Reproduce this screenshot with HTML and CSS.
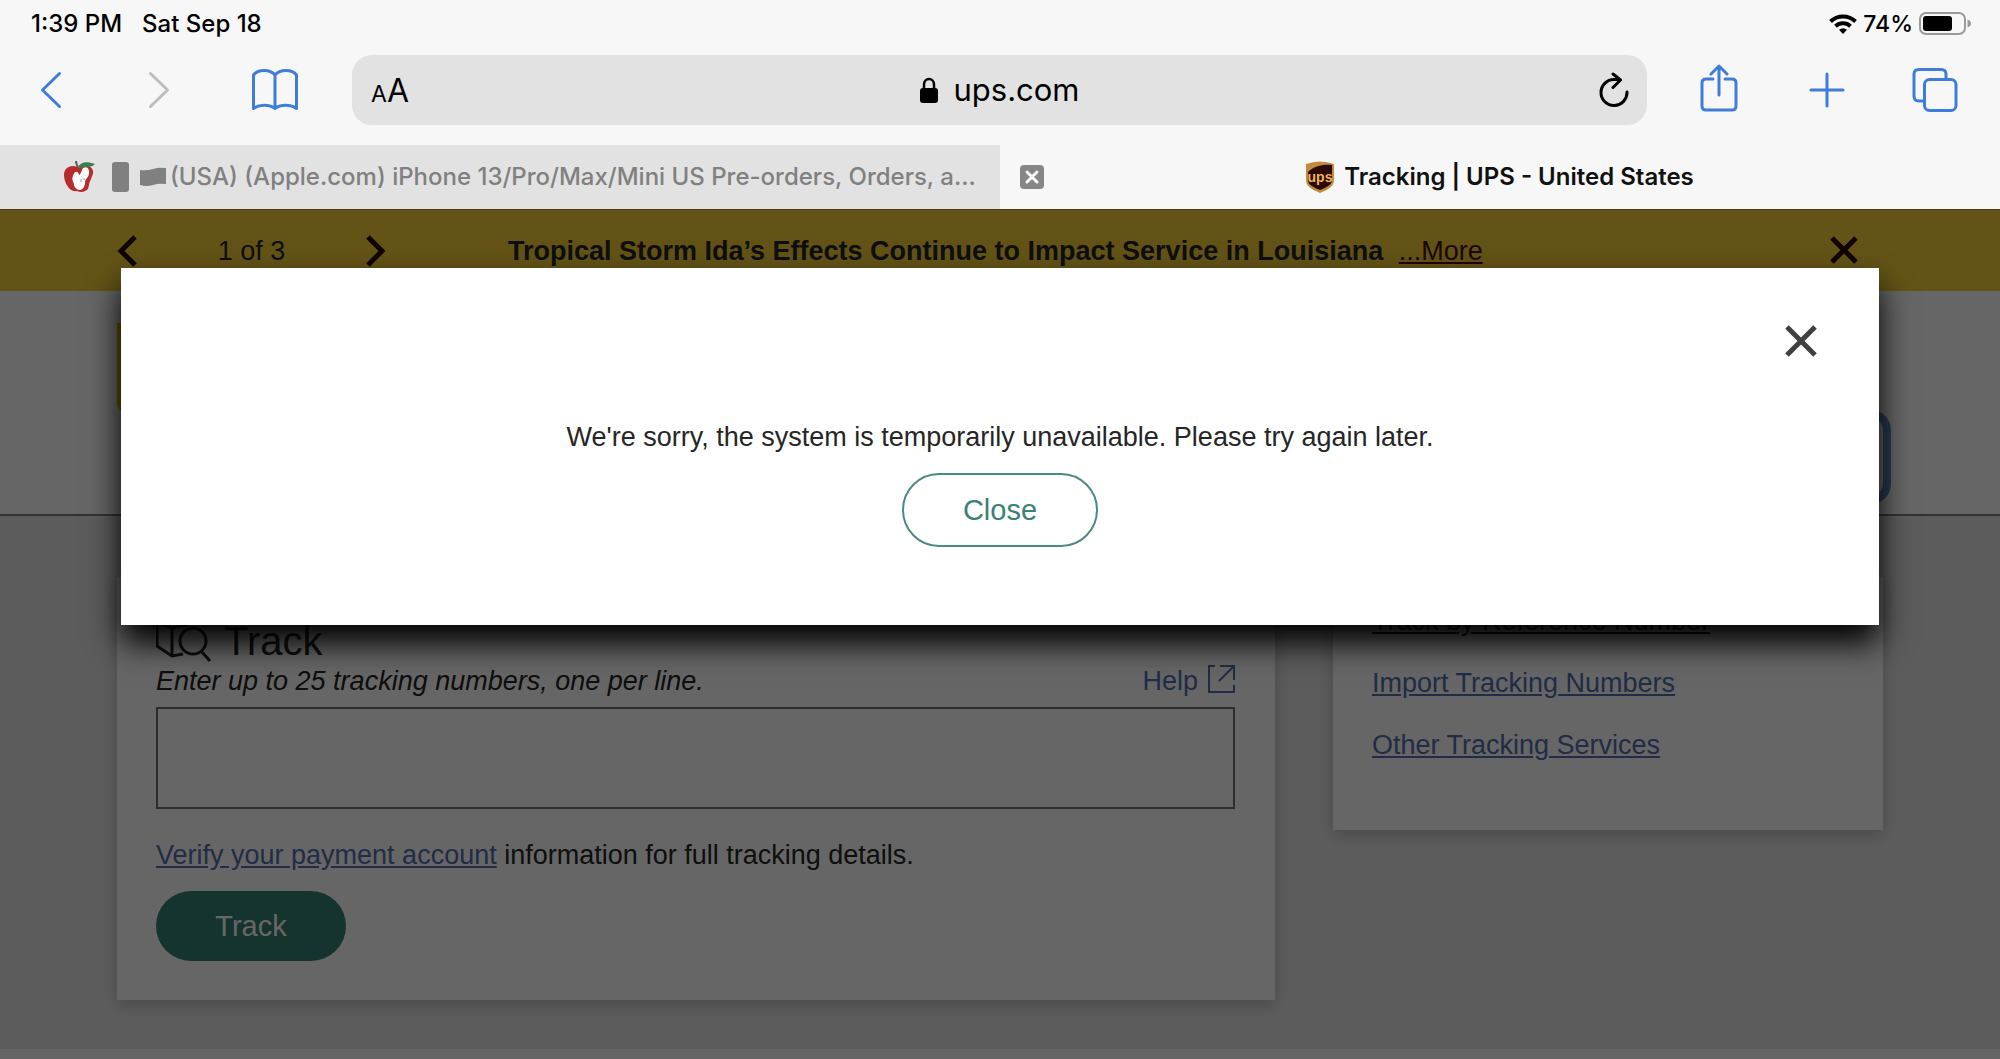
FILE: index.html
```html
<!DOCTYPE html>
<html lang="en">
<head>
<meta charset="utf-8">
<title>Tracking | UPS - United States</title>
<link rel="stylesheet" href="styles.css">
</head>
<body>
<div class="browser">
  <div class="status">
    <span>1:39 PM</span>
    <span class="status-date">Sat Sep 18</span>
    <span class="status-right">
      <svg width="28" height="20" viewBox="0 0 28 20" aria-hidden="true"><g fill="none" stroke="#000" stroke-width="4"><path d="M1.500 7.500A18 18 0 0 1 26.500 7.500"/><path d="M6.500 12.300A11 11 0 0 1 21.500 12.300"/></g><path d="M14 20L10 15.800Q14 12.800 18 15.800Z"/></svg>
      <span>74%</span>
      <svg width="52" height="24" viewBox="0 0 52 24" aria-hidden="true"><rect x="1" y="1" width="45" height="21" rx="6" fill="none" stroke="#9a9a9a" stroke-width="2"/><rect x="4" y="4" width="29" height="15" rx="3"/><path d="M48.500 7.500Q52 9 52 11.500T48.500 15.500Z" fill="#9a9a9a"/></svg>
    </span>
  </div>
  <div class="toolbar">
    <button class="tool" aria-label="Back"><svg width="22" height="38" viewBox="0 0 22 38"><path d="M19.500 2.500L2.500 19L19.500 35.500"/></svg></button>
    <button class="tool tool-off" aria-label="Forward"><svg width="22" height="38" viewBox="0 0 22 38"><path d="M2.500 2.500L19.500 19L2.500 35.500"/></svg></button>
    <button class="tool tool-book" aria-label="Bookmarks"><svg width="48" height="42" viewBox="0 0 48 42"><path d="M24 6C19 0 7 0 2.500 6V39.500C8 35 19 35 24 39.500C29 35 40 35 45.500 39.500V6C41 0 29 0 24 6ZM24 6V39.500"/></svg></button>
    <div class="address">
      <button class="reader" aria-label="Reader view"><span class="small-a">A</span><span>A</span></button>
      <div class="host">
        <svg width="18" height="27" viewBox="0 0 18 27" aria-hidden="true"><rect y="11" width="18" height="15" rx="3"/><path d="M4 13V7.500A5 5.500 0 0 1 14 7.500V13" fill="none" stroke="#000" stroke-width="2.500"/></svg>
        <span>ups.com</span>
      </div>
      <button class="reload" aria-label="Reload"><svg width="30" height="36" viewBox="0 0 30 36"><path d="M28 20A13 13 0 1 1 15 7.500H21M14 2L21.500 8L14 15.500"/></svg></button>
    </div>
    <button class="tool tool-share" aria-label="Share"><svg width="38" height="48" viewBox="0 0 38 48"><path d="M13 15H6Q2 15 2 19V42Q2 46 6 46H32Q36 46 36 42V19Q36 15 32 15H25M19 31V2M11 10L19 2L27 10"/></svg></button>
    <button class="tool" aria-label="New tab"><svg width="36" height="36" viewBox="0 0 36 36"><path d="M18 2V34M2 18H34"/></svg></button>
    <button class="tool" aria-label="Show tabs"><svg width="46" height="44" viewBox="0 0 46 44"><path d="M12 33H7Q2 33 2 28V6Q2 1.500 7 1.500H29Q34 1.500 34 6V11"/><rect x="12.500" y="11.500" width="31.500" height="31" rx="5"/></svg></button>
  </div>
  <div class="tabs">
    <div class="tab tab-idle">
      <svg width="32" height="32" viewBox="0 0 32 32" aria-hidden="true"><path d="M14 6C6 3 0 7 0 14C0 22 6 32 13 30C17 32 21 31 24 28L25 24C25 21 27 19 28 15C31 10 28 5 22 5C19 5 17 7 14 6Z" fill="#b62c2c"/><path d="M9 15C10 10 14 9 15 14C18 13 17 6 22 6C26 7 26 14 23 17C20 20 22 22 20 26C17 31 11 29 10 24C10 21 7 19 9 15Z" fill="#fff"/><path d="M17 18V21M20 17V19" stroke="#999"/><path d="M14 6C17 1 22 0 31 3C27 7 20 7 14 6Z" fill="#3e7d52"/><path d="M14 6Q12 3 12 0" stroke="#41624b" stroke-width="2" fill="none"/></svg>
      <svg class="glyph-phone" width="17" height="30" viewBox="0 0 17 30" aria-hidden="true"><rect width="17" height="30" rx="3"/></svg>
      <svg class="glyph-flag" width="26" height="20" viewBox="0 0 26 20" aria-hidden="true"><path d="M0 3Q7 4 13 2T26 1V17Q19 16 13 18T0 18Z"/></svg>
      <span>(USA) (Apple.com) iPhone 13/Pro/Max/Mini US Pre-orders, Orders, a...</span>
    </div>
    <div class="tab tab-current">
      <button class="tab-close" aria-label="Close tab"><svg width="24" height="24" viewBox="0 0 24 24"><path d="M7 7L17 17M17 7L7 17"/></svg></button>
      <div class="tab-label">
        <svg width="28" height="32" viewBox="0 0 28 32" aria-hidden="true"><path d="M0 3Q14-2 28 3V19C28 25 23 28 14 32C5 28 0 25 0 19Z" fill="#c18b3c"/><path d="M2 11C8 5 17 3 26 4V19C26 24 21 26 14 29C7 26 2 24 2 19Z" fill="#2c0a08"/><text x="14" y="21" text-anchor="middle" font-family="Liberation Sans" font-weight="bold" font-size="14" fill="#f0b458">ups</text></svg>
        <span>Tracking | UPS - United States</span>
      </div>
    </div>
  </div>
</div>

<div class="page">
  <div class="alert">
    <div class="pager">
      <button class="plain" aria-label="Previous alert"><svg width="20" height="32" viewBox="0 0 20 32"><path d="M18 2L4 16L18 30"/></svg></button>
      <span>1 of 3</span>
      <button class="plain" aria-label="Next alert"><svg width="20" height="32" viewBox="0 0 20 32"><path d="M2 2L16 16L2 30"/></svg></button>
    </div>
    <p class="alert-text"><strong>Tropical Storm Ida’s Effects Continue to Impact Service in Louisiana</strong> <a href="#">...More</a></p>
    <button class="plain alert-close" aria-label="Dismiss alert"><svg width="28" height="28" viewBox="0 0 28 28"><path d="M2 2L26 26M26 2L2 26"/></svg></button>
  </div>

  <header class="masthead">
    <svg width="78" height="93" viewBox="0 0 78 93" aria-hidden="true"><path d="M0 0H78V82C76 88 60 90 39 93C18 90 4 93 0 82Z" fill="#f8c800"/></svg>
    <button class="menu" aria-label="Menu"></button>
  </header>

  <main class="content">
    <form class="card track">
      <h1 class="track-title"><svg width="56" height="42" viewBox="0 0 56 42" aria-hidden="true"><path d="M16 36V8L1 2V26L16 36L27 34M1 2L16 0L33 4L16 8"/><circle cx="37" cy="21" r="13"/><path d="M45 31L54 41"/></svg>Track</h1>
      <div class="track-hint">
        <label for="numbers">Enter up to 25 tracking numbers, one per line.</label>
        <a class="help" href="#">Help <svg width="27" height="28" viewBox="0 0 27 28" aria-hidden="true"><path d="M7 1H1V27H26V20M11 16L26 1M12 1H26V15"/></svg></a>
      </div>
      <textarea id="numbers" class="numbers"></textarea>
      <p class="verify"><a href="#">Verify your payment account</a> information for full tracking details.</p>
      <button class="pill pill-solid" type="button">Track</button>
    </form>
    <nav class="card services">
      <a class="active" href="#">Track by Reference Number</a>
      <a href="#">Import Tracking Numbers</a>
      <a href="#">Other Tracking Services</a>
    </nav>
  </main>
  <footer class="footer"></footer>

  <div class="overlay">
    <div class="modal" role="dialog" aria-labelledby="modal-text">
      <button class="plain modal-close" aria-label="Close dialog"><svg width="32" height="32" viewBox="0 0 32 32"><path d="M2 2L30 30M30 2L2 30"/></svg></button>
      <p id="modal-text" class="modal-text">We're sorry, the system is temporarily unavailable. Please try again later.</p>
      <button class="pill pill-outline">Close</button>
    </div>
  </div>
</div>
</body>
</html>
```
FILE: styles.css
```css
* { box-sizing: border-box; }

body {
  margin: 0;
  min-height: 100vh;
  display: flex;
  flex-direction: column;
  font-family: "Liberation Sans", Arial, sans-serif;
  font-size: 27px;
  line-height: 32px;
  color: #262626;
}

button { font: inherit; padding: 0; border: 0; background: none; color: inherit; }
h1, p { margin: 0; }
svg { display: block; flex: none; }

/* Browser chrome */
.browser {
  background: #f7f7f7;
  color: #000;
  font-family: Inter, "Liberation Sans", sans-serif;
}

.status {
  display: flex;
  align-items: center;
  height: 47px;
  padding: 0 29px 0 31px;
  font-size: 24px;
  font-weight: 500;
}
.status-date { margin-left: 20px; }
.status-right { margin-left: auto; display: flex; align-items: center; gap: 6px; font-size: 23px; }

.toolbar {
  display: flex;
  align-items: center;
  height: 98px;
  padding: 0 41px 12px 27px;
  gap: 60px;
}
.tool { width: 48px; height: 60px; display: flex; align-items: center; justify-content: center; }
.tool svg { fill: none; stroke: #3f7ddb; stroke-width: 3; stroke-linecap: round; stroke-linejoin: round; }
.tool-off svg { stroke: #bdbdbd; }
.tool-book { width: 64px; }
.tool-share { padding-bottom: 4px; }

.address {
  flex: 1;
  display: grid;
  grid-template-columns: 1fr auto 1fr;
  align-items: center;
  height: 70px;
  margin: 0 -12px 0 -15px;
  padding: 0 18px 0 19px;
  border-radius: 20px;
  background: #e2e2e2;
}
.reader { justify-self: start; display: flex; align-items: baseline; padding-top: 4px; font-size: 32px; }
.small-a { font-size: 23px; }
.host { display: flex; align-items: center; gap: 15px; font-size: 31px; }
.reload { justify-self: end; }
.reload svg { fill: none; stroke: #000; stroke-width: 3; stroke-linecap: round; stroke-linejoin: round; }

.tabs { display: grid; grid-template-columns: 1fr 1fr; height: 64px; font-size: 24px; font-weight: 600; }
.tab { display: flex; align-items: center; min-width: 0; white-space: nowrap; }
.tab-idle { padding: 0 20px 0 64px; background: #e2e2e2; color: #808080; font-weight: 500; }
.glyph-phone { margin-left: 16px; fill: #808080; }
.glyph-flag { margin: 0 4px 0 11px; fill: #808080; }
.tab-current { padding: 0 44px 0 20px; color: #111; }
.tab-close { border-radius: 4px; background: #868686; }
.tab-close svg { fill: none; stroke: #fff; stroke-width: 3; stroke-linecap: round; }
.tab-label { flex: 1; display: flex; align-items: center; justify-content: center; gap: 10px; }

/* Site */
.page {
  position: relative;
  flex: 1;
  display: flex;
  flex-direction: column;
  background: #fff;
}
.page a { color: #5470ac; }
.plain svg { fill: none; stroke: currentColor; stroke-width: 5; }

.alert {
  display: flex;
  align-items: center;
  height: 82px;
  padding: 0 142px 0 117px;
  border-top: 1px solid #b89a30;
  background: #f8d039;
}
.pager { width: 269px; display: flex; align-items: center; justify-content: space-between; color: #2a0500; }
.pager span { color: #262626; }
.alert-text { margin-left: 122px; }
.alert-text strong { margin-right: 8px; }
.page .alert-text a { color: #4a1004; }
.alert-close { margin-left: auto; padding-bottom: 2px; color: #2a0500; }

.masthead {
  display: flex;
  justify-content: space-between;
  height: 225px;
  padding: 32px 117px 18px;
  border-bottom: 2px solid #808080;
}
.menu {
  align-self: flex-end;
  width: 78px;
  height: 78px;
  border-radius: 12px;
  background: #fff;
  box-shadow: 0 0 0 8px #6a92c8;
}

.content {
  flex: 1;
  display: grid;
  grid-template-columns: 1158fr 550fr;
  gap: 58px;
  align-items: start;
  padding: 61px 117px 49px;
  background: #e6e6e6;
}
.card { background: #fff; box-shadow: 0 5px 14px rgba(0, 0, 0, 0.2); }
.track { padding: 40px 40px 39px 39px; }
.track-title { display: flex; align-items: center; gap: 12px; font-size: 40px; line-height: 48px; font-weight: 400; }
.track-title svg { fill: none; stroke: #262626; stroke-width: 3; }
.track-hint { display: flex; justify-content: space-between; font-style: italic; }
.page .help { display: flex; gap: 10px; font-style: normal; text-decoration: none; }
.help svg { fill: none; stroke: #5470ac; stroke-width: 2; }
.numbers {
  display: block;
  width: 100%;
  height: 102px;
  margin-top: 10px;
  padding: 8px;
  border: 2px solid #707070;
  border-radius: 0;
  background: #fff;
  font: inherit;
  resize: none;
}
.verify { margin: 30px 0 20px; }

.pill { display: block; border-radius: 37px; font-size: 29px; }
.pill-solid { width: 190px; height: 70px; background: #378277; color: #fff; }
.pill-outline { width: 196px; height: 74px; border: 2px solid #4b8a80; color: #3c8175; }

.services { display: grid; gap: 30px; padding: 28px 39px 69px; }
.services a { justify-self: start; }
.page .active { color: #262626; }

.footer { height: 10px; background: #fafafa; }

.overlay {
  position: absolute;
  inset: 0;
  padding: 59px 121px;
  background: rgba(0, 0, 0, 0.6);
}
.modal {
  display: flex;
  flex-direction: column;
  align-items: center;
  padding: 57px 62px 78px;
  background: #fff;
  box-shadow: 0 18px 30px #000;
}
.modal-close { align-self: flex-end; color: #404040; }
.modal-text { margin: 64px 0 20px; }
```
